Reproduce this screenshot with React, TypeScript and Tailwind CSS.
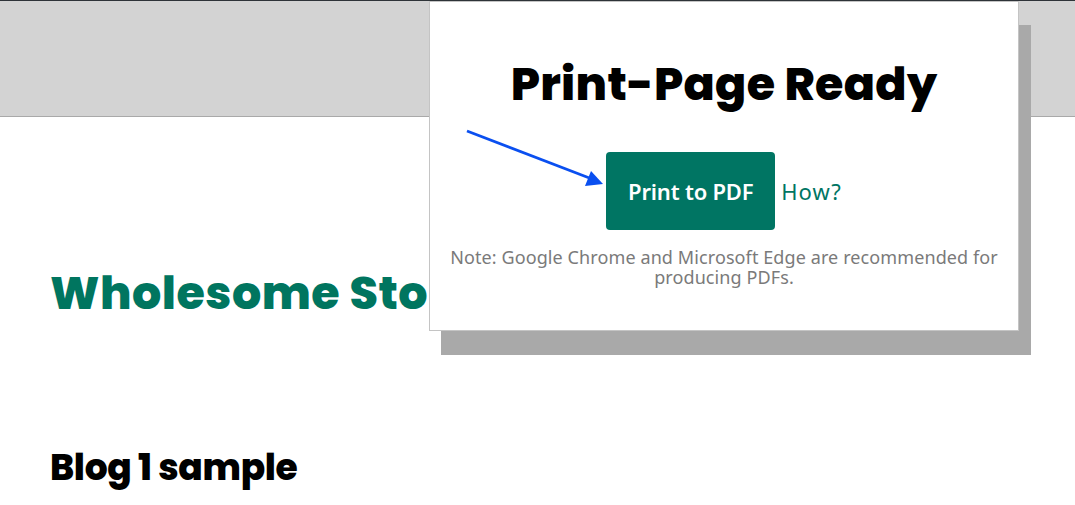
import React from "react";

export default function App() {
  const heading = { fontFamily: '"Poppins", Inter, "Noto Sans", sans-serif' };
  const body = { fontFamily: '"Muli", "Noto Sans", "Open Sans", sans-serif' };
  return (
    <div className="relative w-[1075px] h-[505px] overflow-hidden bg-white">
      <div className="h-[117px] bg-[#d3d3d3] border-t border-t-[#2e3338] border-b border-b-[#a9a9a9]" />
      <div className="pl-[50px]">
        <h1
          className="mt-[148px] text-[46px] leading-[56px] font-extrabold text-[#00755f] whitespace-nowrap tracking-[0.5px]"
          style={heading}
        >
          Wholesome Stories
        </h1>
        <h2
          className="mt-[125px] text-[36px] leading-[44px] font-extrabold text-black tracking-[-0.3px]"
          style={heading}
        >
          Blog 1 sample
        </h2>
      </div>

      <div className="absolute left-[429px] top-[1px] w-[590px] h-[330px] bg-white border border-[#c4c4c4] shadow-[12px_24px_0_#a9a9a9] flex flex-col items-center">
        <h1
          className="mt-[54px] text-[46px] leading-[56px] font-extrabold text-black tracking-[0.3px]"
          style={heading}
        >
          Print-Page Ready
        </h1>
        <div className="mt-[40px] flex items-center gap-[6px]">
          <button
            className="w-[169px] h-[78px] rounded-[4px] bg-[#007563] text-white text-[22px] font-semibold tracking-[-0.2px]"
            style={body}
          >
            Print to PDF
          </button>
          <span className="text-[22px] text-[#007563] tracking-[1px]" style={body}>
            How?
          </span>
        </div>
        <p
          className="mt-[17px] w-[580px] text-center text-[18px] leading-[20px] text-[#7a7a7a] tracking-[0.1px]"
          style={body}
        >
          Note: Google Chrome and Microsoft Edge are recommended for producing PDFs.
        </p>
      </div>

      <svg
        className="absolute left-0 top-0 pointer-events-none"
        width="1075"
        height="505"
        viewBox="0 0 1075 505"
      >
        <line x1="467" y1="131" x2="592" y2="179" stroke="#0a4ff0" strokeWidth="2.8" />
        <polygon points="603,184 585,186 591,171" fill="#0a4ff0" />
      </svg>
    </div>
  );
}
